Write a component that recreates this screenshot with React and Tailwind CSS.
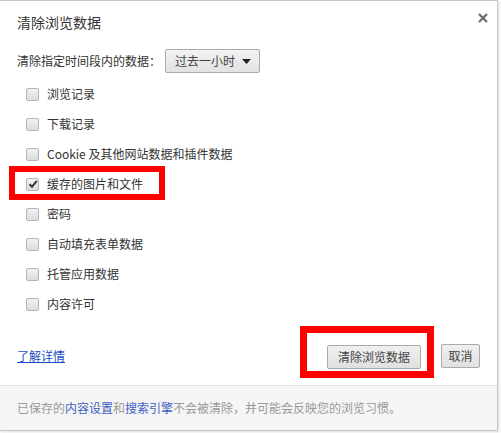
import React from "react";

const ITEMS = [
    { label: "浏览记录", checked: false },
    { label: "下载记录", checked: false },
    { label: "Cookie 及其他网站数据和插件数据", checked: false },
    { label: "缓存的图片和文件", checked: true, marked: true },
    { label: "密码", checked: false },
    { label: "自动填充表单数据", checked: false },
    { label: "托管应用数据", checked: false },
    { label: "内容许可", checked: false },
];

const Checkbox = ({ checked }) => (
    <span className="w-[13px] h-[13px] shrink-0 rounded-[2px] border border-[#b4b4b4] bg-gradient-to-b from-[#f2f2f2] to-[#dcdcdc] flex items-center justify-center">
        {checked && (
            <svg width="10" height="10" viewBox="0 0 10 10">
                <path d="M1.5 5.2 L4 7.8 L8.8 1.8" fill="none" stroke="#333" strokeWidth="2" />
            </svg>
        )}
    </span>
);

const Button = ({ children, className = "" }) => (
    <button
        type="button"
        className={`h-[24px] border border-[#aaa] rounded-[2px] bg-gradient-to-b from-[#f0f0f0] to-[#e0e0e0] text-[12px] text-[#444] leading-none ${className}`}
    >
        {children}
    </button>
);

export default function App() {
    return (
        <div
            className="w-[501px] h-[433px] bg-white"
            style={{ fontFamily: '"Noto Sans CJK SC", "Microsoft YaHei", sans-serif' }}
        >
            <div className="w-[498px] h-[431px] border-t border-r border-b border-[#c8c8c8] flex flex-col shadow-[1px_1px_2px_rgba(0,0,0,0.15)]">
                {/* Header */}
                <div className="flex items-start justify-between pl-[17px] pr-[9px] pt-[11px]">
                    <h1 className="text-[14px] leading-[20px] text-[#333] font-normal">清除浏览数据</h1>
                    <svg width="10" height="10" viewBox="0 0 10 10" className="mt-[1px]">
                        <path d="M1 1 L9 9 M9 1 L1 9" stroke="#6a6a6a" strokeWidth="2.2" />
                    </svg>
                </div>

                {/* Time range */}
                <div className="flex items-center pl-[17px] mt-[17px] h-[24px]">
                    <span className="text-[12px] text-[#333] w-[148px]">清除指定时间段内的数据：</span>
                    <div className="h-[24px] w-[95px] border border-[#aaa] rounded-[2px] bg-gradient-to-b from-[#f3f3f3] to-[#e2e2e2] flex items-center justify-between pl-[9px] pr-[8px]">
                        <span className="text-[12px] text-[#444]">过去一小时</span>
                        <svg width="9" height="5" viewBox="0 0 9 5">
                            <path d="M0 0 L9 0 L4.5 5 Z" fill="#222" />
                        </svg>
                    </div>
                </div>

                {/* Options */}
                <div className="mt-[6px] flex flex-col">
                    {ITEMS.map((item) => (
                        <div key={item.label} className="relative h-[30px] flex items-center pl-[26px] gap-[8px]">
                            <Checkbox checked={item.checked} />
                            <span className="text-[12px] text-[#333] whitespace-nowrap">{item.label}</span>
                            {item.marked && (
                                <div className="absolute left-[9px] top-[-3px] w-[156px] h-[34px] border-[6px] border-[#f00]" />
                            )}
                        </div>
                    ))}
                </div>

                {/* Actions */}
                <div className="flex items-center justify-between pl-[17px] pr-[17px] mt-[24px]">
                    <a className="text-[12px] text-[#1a4fbf] underline">了解详情</a>
                    <div className="flex items-center gap-[20px]">
                        <div className="relative">
                            <Button className="w-[94px]">清除浏览数据</Button>
                            <div className="absolute left-[-27px] top-[-17px] w-[134px] h-[52px] border-[7px] border-[#f00]" />
                        </div>
                        <Button className="w-[39px]">取消</Button>
                    </div>
                </div>

                {/* Footer */}
                <div className="mt-[16px] flex-1 border-t border-[#e3e3e3] bg-[#f5f5f5] flex items-center pl-[17px]">
                    <p className="text-[12px] text-[#999]">
                        已保存的<span className="text-[#3d5fc4]">内容设置</span>和<span className="text-[#3d5fc4]">搜索引擎</span>不会被清除，并可能会反映您的浏览习惯。
                    </p>
                </div>
            </div>
        </div>
    );
}
